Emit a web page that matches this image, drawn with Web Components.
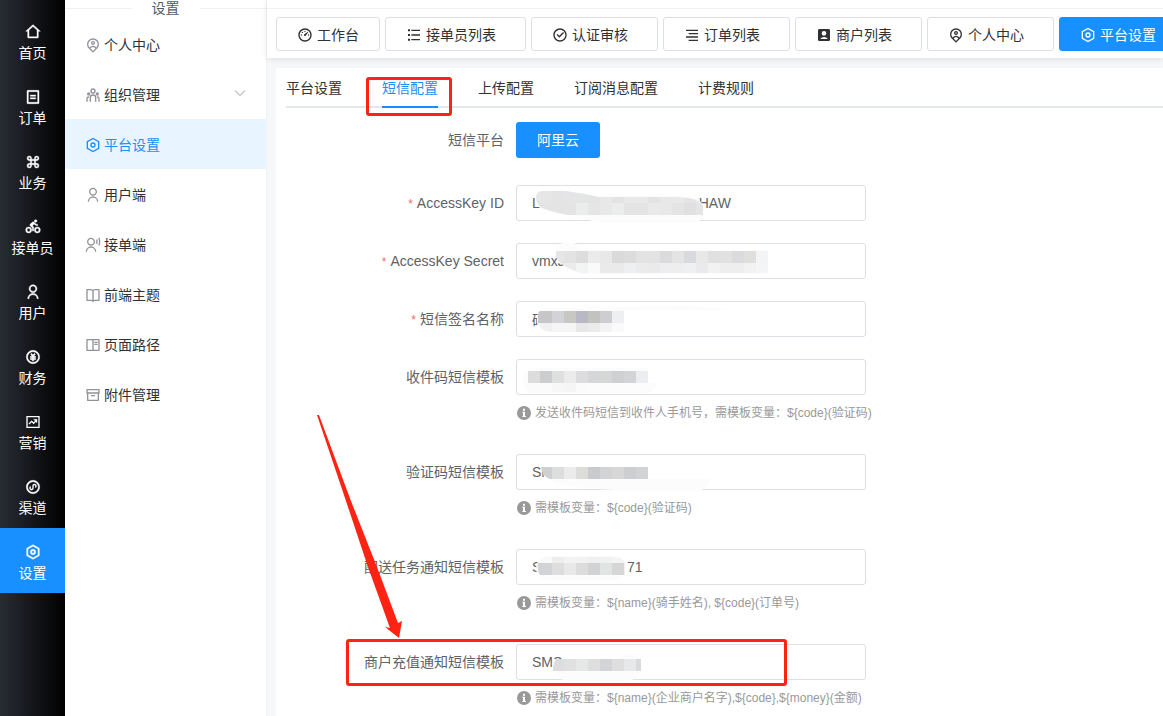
<!DOCTYPE html>
<html lang="zh-CN">
<head>
<meta charset="utf-8">
<meta name="viewport" content="width=device-width, initial-scale=1">
<title>平台设置</title>
<style>
  body {
    margin: 0;
    font: 14px/20px "Liberation Sans", "Noto Sans CJK SC", sans-serif;
    color: #303133;
    --blue: #1890ff;
    --line: #dcdfe6;
    --red: #ff2314;
  }
</style>
</head>
<body>
<admin-app></admin-app>

<script>
const CIRCLE = 'M12 22C6.477 22 2 17.523 2 12S6.477 2 12 2s10 4.477 10 10-4.477 10-10 10zm0-2a8 8 0 1 0 0-16 8 8 0 0 0 0 16z';
const p = d => `<path d="${d}"/>`;
const ICONS = {
  home: p('M19 21H5a1 1 0 0 1-1-1v-9H1l10.327-9.388a1 1 0 0 1 1.346 0L23 11h-3v9a1 1 0 0 1-1 1zM6 19h12V9.157l-6-5.454-6 5.454V19z'),
  order: p('M20 22H4a1 1 0 0 1-1-1V3a1 1 0 0 1 1-1h16a1 1 0 0 1 1 1v18a1 1 0 0 1-1 1zm-1-2V4H5v16h14zM8 9h8v2H8V9zm0 4h8v2H8v-2z'),
  command: p('M10 8h4V6.5a3.5 3.5 0 1 1 3.5 3.5H16v4h1.5a3.5 3.5 0 1 1-3.5 3.5V16h-4v1.5A3.5 3.5 0 1 1 6.5 14H8v-4H6.5A3.5 3.5 0 1 1 10 6.5V8zM8 8V6.5A1.5 1.5 0 1 0 6.5 8H8zm0 8H6.5A1.5 1.5 0 1 0 8 17.5V16zm8-8h1.5A1.5 1.5 0 1 0 16 6.5V8zm0 8v1.5a1.5 1.5 0 1 0 1.5-1.5H16zm-6-6v4h4v-4h-4z'),
  riding: p('M5.5 21a4.5 4.5 0 1 1 0-9 4.5 4.5 0 0 1 0 9zm0-2a2.5 2.5 0 1 0 0-5 2.5 2.5 0 0 0 0 5zm13 2a4.5 4.5 0 1 1 0-9 4.5 4.5 0 0 1 0 9zm0-2a2.5 2.5 0 1 0 0-5 2.5 2.5 0 0 0 0 5zm-7.477-8.695L13 12v6h-2v-5l-2.719-2.266A2 2 0 0 1 8 7.671l2.828-2.828a2 2 0 0 1 2.829 0l1.414 1.414a6.969 6.969 0 0 0 3.917 1.975l-.01 2.015a8.962 8.962 0 0 1-5.321-2.575l-2.634 2.696zM16 5a2 2 0 1 1 0-4 2 2 0 0 1 0 4z'),
  user: p('M4 22a8 8 0 1 1 16 0h-2a6 6 0 1 0-12 0H4zm8-9c-3.315 0-6-2.685-6-6s2.685-6 6-6 6 2.685 6 6-2.685 6-6 6zm0-2c2.21 0 4-1.79 4-4s-1.79-4-4-4-4 1.79-4 4 1.79 4 4 4z'),
  money: p(CIRCLE + 'm1-7v1h3v2h-3v2h-2v-2H8v-2h3v-1H8v-2h2.586L8.464 7.879 9.88 6.464 12 8.586l2.121-2.122 1.415 1.415L13.414 11H16v2h-3z'),
  chart: '<path fill="none" stroke="currentColor" stroke-width="2" d="M3 4h18v16H3zM6 15l4-4 3 3 4.500-5"/><path d="M13 8h5v5z"/>',
  mini: p(CIRCLE) + '<path fill="none" stroke="currentColor" stroke-width="2" stroke-linecap="round" d="M8 12a2.300 2.300 0 1 0 4 2V10a2.300 2.300 0 1 1 4 2"/>',
  settings: p('M12 1l9.500 5.500v11L12 23l-9.500-5.500v-11L12 1zm0 2.311L4.500 7.653v8.694l7.500 4.342 7.500-4.342V7.653L12 3.311zM12 16a4 4 0 1 1 0-8 4 4 0 0 1 0 8zm0-2a2 2 0 1 0 0-4 2 2 0 0 0 0 4z'),
  pin: p('M17.084 15.812a7 7 0 1 0-10.168 0A5.996 5.996 0 0 1 12 13a5.996 5.996 0 0 1 5.084 2.812zm-8.699 1.473L12 20.899l3.615-3.614a4 4 0 0 0-7.230 0zM12 23.728l-6.364-6.364a9 9 0 1 1 12.728 0L12 23.728zM12 10a1 1 0 1 0 0-2 1 1 0 0 0 0 2zm0 2a3 3 0 1 1 0-6 3 3 0 0 1 0 6z'),
  team: p('M12 11a5 5 0 0 1 5 5v6h-2v-6a3 3 0 0 0-2.824-2.995L12 13a3 3 0 0 0-2.995 2.824L9 16v6H7v-6a5 5 0 0 1 5-5zm-6.500 3c.279 0 .55.033.81.094a5.947 5.947 0 0 0-.301 1.575L6 16v.086a1.492 1.492 0 0 0-.356-.08L5.500 16a1.500 1.500 0 0 0-1.493 1.356L4 17.500V22H2v-4.500A3.500 3.500 0 0 1 5.500 14zm13 0a3.500 3.500 0 0 1 3.500 3.500V22h-2v-4.500a1.500 1.500 0 0 0-1.356-1.493L18.500 16c-.175 0-.343.03-.5.085V16c0-.666-.108-1.306-.309-1.904.259-.063.53-.096.809-.096zm-13-6a2.500 2.500 0 1 1 0 5 2.500 2.500 0 0 1 0-5zm13 0a2.500 2.500 0 1 1 0 5 2.500 2.500 0 0 1 0-5zm-13 2a.5.5 0 1 0 0 1 .5.5 0 0 0 0-1zm13 0a.5.5 0 1 0 0 1 .5.5 0 0 0 0-1zM12 2a4 4 0 1 1 0 8 4 4 0 0 1 0-8zm0 2a2 2 0 1 0 0 4 2 2 0 0 0 0-4z'),
  voice: p('M1 22a8 8 0 1 1 16 0h-2a6 6 0 1 0-12 0H1zm8-9c-3.315 0-6-2.685-6-6s2.685-6 6-6 6 2.685 6 6-2.685 6-6 6zm0-2c2.210 0 4-1.790 4-4s-1.790-4-4-4-4 1.790-4 4 1.790 4 4 4zM21.548.784A13.942 13.942 0 0 1 23 7c0 2.233-.523 4.344-1.452 6.216l-1.645-1.196A11.955 11.955 0 0 0 21 7c0-1.792-.393-3.493-1.097-5.020L21.548.784zm-3.302 2.400A9.970 9.970 0 0 1 19 7a9.970 9.970 0 0 1-.754 3.816l-1.677-1.220A7.990 7.990 0 0 0 17 7a7.990 7.990 0 0 0-.43-2.596l1.676-1.220z'),
  book: p('M13 21v2h-2v-2H3a1 1 0 0 1-1-1V4a1 1 0 0 1 1-1h6a3.990 3.990 0 0 1 3 1.354A3.990 3.990 0 0 1 15 3h6a1 1 0 0 1 1 1v16a1 1 0 0 1-1 1h-8zm7-2V5h-5a2 2 0 0 0-2 2v12h7zm-9 0V7a2 2 0 0 0-2-2H4v14h7z'),
  read: p('M2 3.993A1 1 0 0 1 2.992 3h18.016c.548 0 .992.445.992.993v16.014a1 1 0 0 1-.992.993H2.992A.993.993 0 0 1 2 20.007V3.993zM11 5H4v14h7V5zm2 0v14h7V5h-7zm1 2h5v2h-5V7zm0 3h5v2h-5v-2z'),
  archive: p('M3 10H2V4.003C2 3.449 2.455 3 2.992 3h18.016A.99.99 0 0 1 22 4.003V10h-1v10.002a.996.996 0 0 1-.993.998H3.993A.996.996 0 0 1 3 20.002V10zm16 0H5v9h14v-9zM4 5v3h16V5H4zm5 7h6v2H9v-2z'),
  dashboard: p('M12 2c5.523 0 10 4.477 10 10s-4.477 10-10 10S2 17.523 2 12 6.477 2 12 2zm0 2a8 8 0 1 0 0 16 8 8 0 0 0 0-16zm3.833 3.337a.596.596 0 0 1 .763.067.59.59 0 0 1 .063.76c-2.180 3.046-3.380 4.678-3.598 4.897a1.500 1.500 0 0 1-2.122-2.122c.374-.373 2.005-1.574 4.894-3.602zM17.500 11a1 1 0 1 1 0 2 1 1 0 0 1 0-2zm-11 0a1 1 0 1 1 0 2 1 1 0 0 1 0-2zm2.318-3.596a1 1 0 1 1-1.414 1.414 1 1 0 0 1 1.414-1.414zM12 5.500a1 1 0 1 1 0 2 1 1 0 0 1 0-2z'),
  list: p('M8 4h13v2H8V4zM3 3.500h3v3H3v-3zm0 7h3v3H3v-3zm0 7h3v3H3v-3zM8 11h13v2H8v-2zm0 7h13v2H8v-2z'),
  check: p(CIRCLE + 'm-.997-4L6.760 11.757l1.414-1.414 2.829 2.829 5.656-5.657 1.415 1.414L11.003 16z'),
  align: p('M3 4h18v2H3V4zm4 15h14v2H7v-2zm-4-5h18v2H3v-2zm4-5h14v2H7V9z'),
  account: p('M3 4.995C3 3.893 3.893 3 4.995 3h14.010C20.107 3 21 3.893 21 4.995v14.010A1.995 1.995 0 0 1 19.005 21H4.995A1.995 1.995 0 0 1 3 19.005V4.995zM6.357 18h11.490a6.992 6.992 0 0 0-5.745-3 6.992 6.992 0 0 0-5.745 3zM12 13a3.500 3.500 0 1 0 0-7 3.500 3.500 0 0 0 0 7z'),
  info: '<circle cx="12" cy="12" r="10.500"/><path fill="#fff" d="M10.500 5.500h3v3h-3zM9.500 10h4v6.500H15V18H9.500v-1.500h1v-5h-1z"/>',
  chevron: '<path fill="none" stroke="currentColor" stroke-width="2" d="M2 7l10 10L22 7"/>'
};

function define(name, render) {
  customElements.define(name, class extends HTMLElement {
    connectedCallback() {
      if (this.shadowRoot) return;
      const t = document.createElement('template');
      t.innerHTML = render(this);
      this.attachShadow({ mode: 'open' }).append(t.content.cloneNode(true));
    }
  });
}
const attr = (el, name) => el.getAttribute(name) || '';

define('ui-icon', el => `
  <style>
    :host { display: block; flex: none; width: 16px; height: 16px; }
    svg { display: block; width: 100%; height: 100%; fill: currentColor; }
    :host([bold]) svg { stroke: currentColor; stroke-width: .6; }
  </style>
  <svg viewBox="0 0 24 24" aria-hidden="true">${ICONS[attr(el, 'name')]}</svg>`);

/* Dark primary navigation */
define('rail-item', el => `
  <style>
    :host { display: block; }
    a { display: flex; flex-direction: column; align-items: center; gap: 3px; height: 65px; box-sizing: border-box;
        padding-top: 16px; color: #fff; text-decoration: none; white-space: nowrap; }
    :host([active]) a { background: var(--blue); }
  </style>
  <a href="#"><ui-icon bold name="${attr(el, 'icon')}"></ui-icon><span><slot></slot></span></a>`);

define('app-rail', () => `
  <style>
    :host { display: block; flex: none; width: 65px; box-sizing: border-box; padding-top: 8px;
            background: linear-gradient(90deg, #282c34, #000); }
  </style>
  <nav>
    <rail-item icon="home">首页</rail-item>
    <rail-item icon="order">订单</rail-item>
    <rail-item icon="command">业务</rail-item>
    <rail-item icon="riding">接单员</rail-item>
    <rail-item icon="user">用户</rail-item>
    <rail-item icon="money">财务</rail-item>
    <rail-item icon="chart">营销</rail-item>
    <rail-item icon="mini">渠道</rail-item>
    <rail-item icon="settings" active>设置</rail-item>
  </nav>`);

/* Secondary menu */
define('menu-item', el => `
  <style>
    :host { display: block; }
    a { display: flex; align-items: center; gap: 3px; height: 50px; box-sizing: border-box; padding: 2px 20px 0;
        color: inherit; text-decoration: none; }
    ui-icon { color: #909399; }
    span { flex: 1; }
    .more { width: 12px; height: 12px; margin-bottom: 4px; }
    :host([active]) a { background: #e8f4ff; color: var(--blue); }
    :host([active]) ui-icon { color: var(--blue); }
  </style>
  <a href="#"><ui-icon name="${attr(el, 'icon')}"></ui-icon><span><slot></slot></span>${
    el.hasAttribute('expandable') ? '<ui-icon class="more" name="chevron"></ui-icon>' : ''}</a>`);

define('sub-menu', () => `
  <style>
    :host { display: block; flex: none; width: 202px; box-sizing: border-box; background: #fff;
            border-right: 1px solid #f0f2f4; }
    h2 { display: flex; align-items: center; gap: 20px; height: 17px; margin: 0 0 2px; font-size: 14px;
         line-height: 17px; font-weight: 400; color: #515a6e; }
    h2::before, h2::after { content: ""; flex: 1; height: 1px; background: #f0f1f3; }
  </style>
  <h2>设置</h2>
  <nav>
    <menu-item icon="pin">个人中心</menu-item>
    <menu-item icon="team" expandable>组织管理</menu-item>
    <menu-item icon="settings" active>平台设置</menu-item>
    <menu-item icon="user">用户端</menu-item>
    <menu-item icon="voice">接单端</menu-item>
    <menu-item icon="book">前端主题</menu-item>
    <menu-item icon="read">页面路径</menu-item>
    <menu-item icon="archive">附件管理</menu-item>
  </nav>`);

/* Open pages */
define('page-tab', el => `
  <style>
    :host { display: block; flex: none; }
    button { display: flex; align-items: center; gap: 4px; height: 34px; padding: 2px 29px 0 20px; margin: 0;
             border: 1px solid var(--line); border-radius: 3px; background: #fff; color: inherit; font: inherit; white-space: nowrap; }
    :host([pinned]) button { padding-right: 20px; }
    :host([active]) button { background: var(--blue); border-color: var(--blue); color: #fff; }
  </style>
  <button type="button"><ui-icon name="${attr(el, 'icon')}"></ui-icon><slot></slot></button>`);

define('page-tabs', () => `
  <style>
    :host { display: block; flex: none; position: relative; background: #fff; box-shadow: 0 1px 6px rgba(0, 21, 41, .1); }
    .edge { height: 8px; border-bottom: 1px solid #f0f1f3; }
    .tabs { display: flex; gap: 5px; padding: 8px 0 7px 9px; overflow: hidden; }
  </style>
  <div class="edge"></div>
  <div class="tabs">
    <page-tab icon="dashboard" pinned>工作台</page-tab>
    <page-tab icon="list">接单员列表</page-tab>
    <page-tab icon="check">认证审核</page-tab>
    <page-tab icon="align">订单列表</page-tab>
    <page-tab icon="account">商户列表</page-tab>
    <page-tab icon="pin">个人中心</page-tab>
    <page-tab icon="settings" active>平台设置</page-tab>
  </div>`);

/* Tabs of the settings page */
define('config-tabs', () => `
  <style>
    :host { display: flex; gap: 40px; border-bottom: 2px solid #e4e7ed; }
    button { position: relative; height: 40px; box-sizing: border-box; margin: 0 0 -2px; padding: 2px 0 0; border: 0;
             border-bottom: 2px solid transparent; background: none; font: inherit; color: inherit; white-space: nowrap; }
    .on { color: var(--blue); border-bottom-color: var(--blue); }
    .mark { position: absolute; inset: 9px -14px -10px -16px; border: 3px solid var(--red); border-radius: 3px; }
  </style>
  <button type="button">平台设置</button>
  <button type="button" class="on">短信配置<span class="mark"></span></button>
  <button type="button">上传配置</button>
  <button type="button">订阅消息配置</button>
  <button type="button">计费规则</button>`);

/* Pixelated redaction over the private part of a value; cells are 12px wide */
const MASKS = {
  id: {
    halo: 'M20 14Q22 3 50 5Q70 10 84 11H170Q188 14 188 24Q188 38 176 38H90Q60 34 30 24Z',
    clip: 'M20 12Q20 6 26 6H50Q66 8 82 12H160Q187 13 187 22V30H52Q38 28 26 23Q20 20 20 12Z',
    x: 12, y: [6, 18, 30],
    rows: ['e7e7e7 e6e6e6 e4e4e4 e5e5e8 e4e5e6 e4e4e4 e8e8e8 e3e3e3 e9e9e9 e9e9e9 e3e3e3 e8e8e8 e9e9e9 e4e4e4 e8e8e8',
           'e7e7e7 e4e4e4 e4e4e4 e4e4e4 ebeded e5e5e5 e8e8e8 ebecec e4e4e4 e4e4e4 e8eaea e8e8e8 e4e4e4 e1dfdf e5e5e5']
  },
  secret: {
    halo: 'M40 8Q42 -1 52 -1Q62 -1 66 7H252V31H66Q44 26 40 8Z',
    clip: 'M40 8H252V30H66Q44 24 40 14Z',
    x: 36, y: [8, 20, 30],
    rows: ['e6e6e6 e4e3e3 dddddd ebebeb e8e8e8 dbdada dddcdc e3e3e3 e3e3e3 dbdbdd e4e4e4 d9dae0 e8e8e8 e0e0e0 e1e1e1 dbdbdd e0dfde f3f4f6',
           'e9e9e9 ebebeb f2f4f3 fafaf8 ebeaeb eaeaea eeeff2 ebebeb e8eaeb eeeeee eeeeee eff0f2 eaeaec f2f2f2 eeeeee eeeeee f2f2f2 f4f5f7']
  },
  sign: {
    halo: 'M21 16Q24 7 40 7L170 5 220 9H108V31H32Q22 30 21 20Z',
    clip: 'M24 10H108V31H36Q24 30 22 22V16Q22 10 24 10Z',
    x: 12, y: [10, 22, 31],
    rows: ['c6c6c6 c6c6c6 d2d3d6 c9c7c4 b8b9c5 c2c2be cdced2 edeff1',
           'f0f0f0 f0f0f0 f5f5f5 f5f5f5 e8e8e9 ebebeb f4f4f4 fafafa']
  },
  pickup: {
    halo: 'M7 18Q8 9 20 9H132V24H142Q138 34 128 34H14Q6 30 7 18Z',
    clip: 'M12 12H132V33H12Z',
    x: 12, y: [12, 24, 33],
    rows: ['dcdcdd cbcdce dde0de ebebeb dcdcde d4d6d8 d5d7d6 ced0d2 d3d4d6 ecedf0',
           'fbfbfb fbfbfb f7f7f7 f5f5f5 fbfbfb fcfcfc fcfcfc fcfcfc fcfcfc fcfcfc']
  },
  verify: {
    halo: 'M25 13H132V25H194Q192 32 186 36H100Q40 34 28 22Z',
    clip: 'M25 13H132V25H34Q26 22 25 13Z',
    x: 24, y: [13, 25],
    rows: ['cecfd1 dcdedd ebebeb dcdcda c9cacd d2d3d4 d6d7d6 cdced1 d2d3d4 eceef0']
  },
  task: {
    halo: 'M20 20Q21 7 32 7H98Q109 8 109 16V24Q106 31 96 31H32Q21 30 20 20Z',
    clip: 'M22 14Q26 9 32 8H98Q108 9 109 14V26H24Q21 22 22 14Z',
    x: 12, y: [7, 14, 26],
    rows: ['fafafa f8f8f8 eeeeee f3f3f3 f2f2f2 f0f0f0 f0f2f1 f4f4f4 f6f6f6',
           'd2d3d6 d2d3d6 dddddd e8e8e8 dcdcdc d2d2d4 e0e4e2 d6d6d7 f0f0f0']
  },
  recharge: {
    halo: 'M37 15H100Q112 8 122 12Q126 20 125 26Q122 37 110 37H50Q38 34 37 24Z',
    clip: 'M40 15H125V27H37Q37 20 40 15Z',
    x: 36, y: [15, 27],
    rows: ['dddddf e0e0e0 e6e7e7 dedede d3d4d7 dededf e6e8ea dadada f3f5f4']
  }
};
define('value-mask', el => {
  const m = MASKS[attr(el, 'name')];
  const cells = m.rows.map((row, r) => row.split(' ').map((c, i) =>
    `<rect x="${m.x + i * 12}" y="${m.y[r]}" width="12" height="${m.y[r + 1] - m.y[r]}" fill="#${c}"/>`).join('')).join('');
  return `
  <style>
    :host { position: absolute; inset: 0; pointer-events: none; }
    svg { display: block; width: 100%; height: 100%; overflow: visible; }
  </style>
  <svg aria-hidden="true"><defs><clipPath id="c"><path d="${m.clip}"/></clipPath></defs>
    <path d="${m.halo}" fill="#fcfcfc"/><g clip-path="url(#c)" shape-rendering="crispEdges">${cells}</g></svg>`;
});

/* One labelled row of the form */
define('form-row', el => `
  <style>
    :host { display: grid; grid-template-columns: 218px minmax(0, 1fr); column-gap: 12px; margin-bottom: 22px; position: relative; }
    label { line-height: 36px; color: #606266; text-align: right; white-space: nowrap; }
    .star { color: #f56c6c; margin-right: 4px; font-size: 12px; line-height: 1; }
    .field { position: relative; max-width: 350px; height: 36px; }
    input { display: block; width: 100%; height: 36px; box-sizing: border-box; margin: 0; padding: 0 15px;
            border: 1px solid var(--line); border-radius: 3px; background: #fff; color: #606266; font: inherit; }
    .hint { grid-column: 2; display: flex; align-items: center; gap: 3px; height: 35px; margin: 0 0 2px;
            font-size: 12px; color: #999; white-space: nowrap; }
  </style>
  <label for="f">${el.hasAttribute('required') ? '<span class="star">*</span>' : ''}${attr(el, 'label')}</label>
  <div class="field"><input id="f" type="text" value="${attr(el, 'value')}"><value-mask name="${attr(el, 'mask')}"></value-mask></div>
  ${attr(el, 'hint') ? `<p class="hint"><ui-icon name="info"></ui-icon>${attr(el, 'hint')}</p>` : ''}
  <slot></slot>`);

/* Frame and arrow that point out the recharge template */
define('row-callout', () => `
  <style>
    :host { position: absolute; left: 60px; top: -5px; width: 441px; height: 47px; box-sizing: border-box;
            border: 3px solid var(--red); border-radius: 3px; pointer-events: none; }
    svg { position: absolute; right: 382px; bottom: 44px; width: 85px; height: 224px; fill: var(--red); }
  </style>
  <svg viewBox="0 0 85 224" aria-hidden="true"><path d="M0 0L2 0L34 86L60 152L81 208L85 206L82 223L68 212L73 213L51 152L29 86Z"/></svg>`);

define('sms-form', () => `
  <style>
    :host { display: block; padding-top: 14px; }
    .platform { display: grid; grid-template-columns: 218px minmax(0, 1fr); column-gap: 12px; margin-bottom: 27px; }
    .label { line-height: 36px; color: #606266; text-align: right; }
    button { justify-self: start; height: 36px; padding: 0 21px; border: 0; border-radius: 3px;
             background: var(--blue); color: #fff; font: inherit; }
  </style>
  <div class="platform"><span class="label" id="platform">短信平台</span><button type="button" aria-describedby="platform">阿里云</button></div>
  <form-row required label="AccessKey ID" value="L${' '.repeat(41)}HAW" mask="id"></form-row>
  <form-row required label="AccessKey Secret" value="vmxJ" mask="secret"></form-row>
  <form-row required label="短信签名名称" value="码" mask="sign"></form-row>
  <form-row label="收件码短信模板" mask="pickup" hint="发送收件码短信到收件人手机号，需模板变量：\${code}(验证码)"></form-row>
  <form-row label="验证码短信模板" value="SM" mask="verify" hint="需模板变量：\${code}(验证码)"></form-row>
  <form-row label="配送任务通知短信模板" value="S${' '.repeat(22)}71" mask="task" hint="需模板变量：\${name}(骑手姓名), \${code}(订单号)"></form-row>
  <form-row label="商户充值通知短信模板" value="SMS" mask="recharge" hint="需模板变量：\${name}(企业商户名字),\${code},\${money}(金额)"><row-callout></row-callout></form-row>`);

define('admin-app', () => `
  <style>
    :host { display: flex; height: 100vh; overflow: hidden; background: #f5f7f9; }
    .page { flex: 1; min-width: 0; display: flex; flex-direction: column; }
    main { flex: 1; min-height: 0; overflow: auto; scrollbar-width: none; padding: 10px 0 0 9px; }
    section { min-height: 100%; box-sizing: border-box; padding-left: 10px; background: #fff; }
  </style>
  <app-rail></app-rail>
  <sub-menu></sub-menu>
  <div class="page">
    <page-tabs></page-tabs>
    <main><section><config-tabs></config-tabs><sms-form></sms-form></section></main>
  </div>`);
</script>
</body>
</html>
